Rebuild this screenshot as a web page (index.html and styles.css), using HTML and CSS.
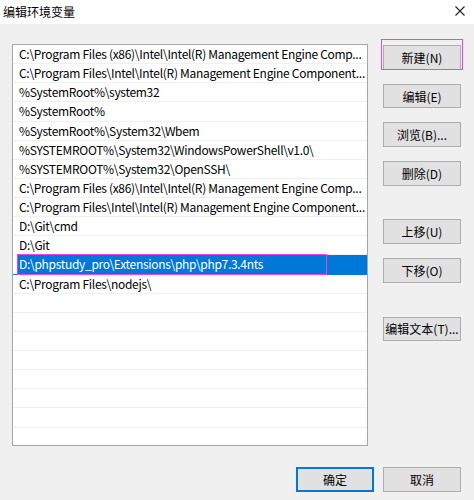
FILE: index.html
```html
<!DOCTYPE html>
<html lang="zh-CN">
<head>
<meta charset="utf-8">
<title>编辑环境变量</title>
<link rel="stylesheet" href="styles.css">
</head>
<body>
<div class="window">
  <div class="titlebar">
    <span class="title">编辑环境变量</span>
    <span class="close">
      <svg width="10" height="10" viewBox="0 0 10 10"><path d="M0.5 0.5 L9.5 9.5 M9.5 0.5 L0.5 9.5" stroke="#222" stroke-width="1.1" fill="none"/></svg>
    </span>
  </div>
  <div class="content">
    <div class="main">
      <div class="list">
        <div class="row"><span class="cell">C:\Program Files (x86)\Intel\Intel(R) Management Engine Comp...</span></div>
        <div class="row"><span class="cell">C:\Program Files\Intel\Intel(R) Management Engine Component...</span></div>
        <div class="row"><span class="cell">%SystemRoot%\system32</span></div>
        <div class="row"><span class="cell">%SystemRoot%</span></div>
        <div class="row"><span class="cell">%SystemRoot%\System32\Wbem</span></div>
        <div class="row"><span class="cell">%SYSTEMROOT%\System32\WindowsPowerShell\v1.0\</span></div>
        <div class="row"><span class="cell">%SYSTEMROOT%\System32\OpenSSH\</span></div>
        <div class="row"><span class="cell">C:\Program Files (x86)\Intel\Intel(R) Management Engine Comp...</span></div>
        <div class="row"><span class="cell">C:\Program Files\Intel\Intel(R) Management Engine Component...</span></div>
        <div class="row"><span class="cell">D:\Git\cmd</span></div>
        <div class="row"><span class="cell">D:\Git</span></div>
        <div class="row selected"><span class="cell">D:\phpstudy_pro\Extensions\php\php7.3.4nts</span><span class="mark mark-row"></span></div>
        <div class="row"><span class="cell">C:\Program Files\nodejs\</span></div>
        <div class="row"></div>
        <div class="row"></div>
        <div class="row"></div>
        <div class="row"></div>
        <div class="row"></div>
        <div class="row"></div>
        <div class="row"></div>
        <div class="row"></div>
        <div class="row"></div>
      </div>
      <div class="buttons">
        <div class="btn-wrap"><button class="btn">新建(N)</button><span class="mark mark-btn"></span></div>
        <button class="btn">编辑(E)</button>
        <button class="btn">浏览(B)...</button>
        <button class="btn">删除(D)</button>
        <button class="btn group">上移(U)</button>
        <button class="btn">下移(O)</button>
        <button class="btn group">编辑文本(T)...</button>
      </div>
    </div>
    <div class="footer">
      <button class="btn default">确定</button>
      <button class="btn">取消</button>
    </div>
  </div>
</div>
</body>
</html>
```
FILE: styles.css
```css
* { box-sizing: border-box; }
html, body { margin: 0; padding: 0; }
body {
  width: 474px;
  height: 500px;
  overflow: hidden;
  font-family: "Noto Sans CJK SC", "Noto Sans", sans-serif;
  font-size: 12px;
  color: #000;
  background: #f0f0f0;
}
.window { width: 474px; height: 500px; display: flex; flex-direction: column; }
.titlebar {
  height: 24px;
  background: #fff;
  display: flex;
  align-items: center;
  justify-content: space-between;
  padding: 0 9px 2px 3px;
}
.title { font-size: 12px; color: #000; }
.close { display: flex; width: 10px; height: 10px; }
.content {
  flex: 1;
  background: #f0f0f0;
  padding: 20px 13px 0 12px;
  display: flex;
  flex-direction: column;
}
.main { display: flex; align-items: flex-start; }
.list {
  width: 356px;
  height: 402px;
  border: 1px solid #a6a6a6;
  background: #fff;
  overflow: hidden;
  display: flex;
  flex-direction: column;
}
.row {
  flex: none;
  height: 19.13px;
  border-bottom: 1px solid #f0f0f0;
  display: flex;
  position: relative;
}
.cell {
  flex: 1;
  margin-left: 5px;
  padding-left: 1px;
  line-height: 18.5px;
  letter-spacing: -0.3px;
  white-space: nowrap;
  overflow: hidden;
}
.row.selected { border-bottom-color: #0078d7; }
.row.selected .cell { background: #0078d7; color: #fff; }
.mark {
  position: absolute;
  border: 1px solid #f040f0;
  pointer-events: none;
  z-index: 2;
}
.mark-row { left: 4px; top: -1px; width: 310px; height: 21px; }
.buttons {
  margin-left: 15px;
  margin-top: 1px;
  display: flex;
  flex-direction: column;
  gap: 14px;
}
.btn-wrap { position: relative; display: flex; }
.mark-btn { left: -2px; top: -6px; width: 82px; height: 31px; }
.btn {
  width: 78px;
  height: 24.7px;
  margin: 0;
  padding: 0;
  background: #e1e1e1;
  border: 1px solid #adadad;
  font-family: inherit;
  font-size: 12px;
  color: #000;
  display: flex;
  align-items: center;
  justify-content: center;
  white-space: nowrap;
}
.btn.group { margin-top: 19.7px; }
.footer {
  margin-top: 21px;
  display: flex;
  justify-content: flex-end;
  gap: 9px;
}
.btn.default { border: 2px solid #0078d7; }
```
